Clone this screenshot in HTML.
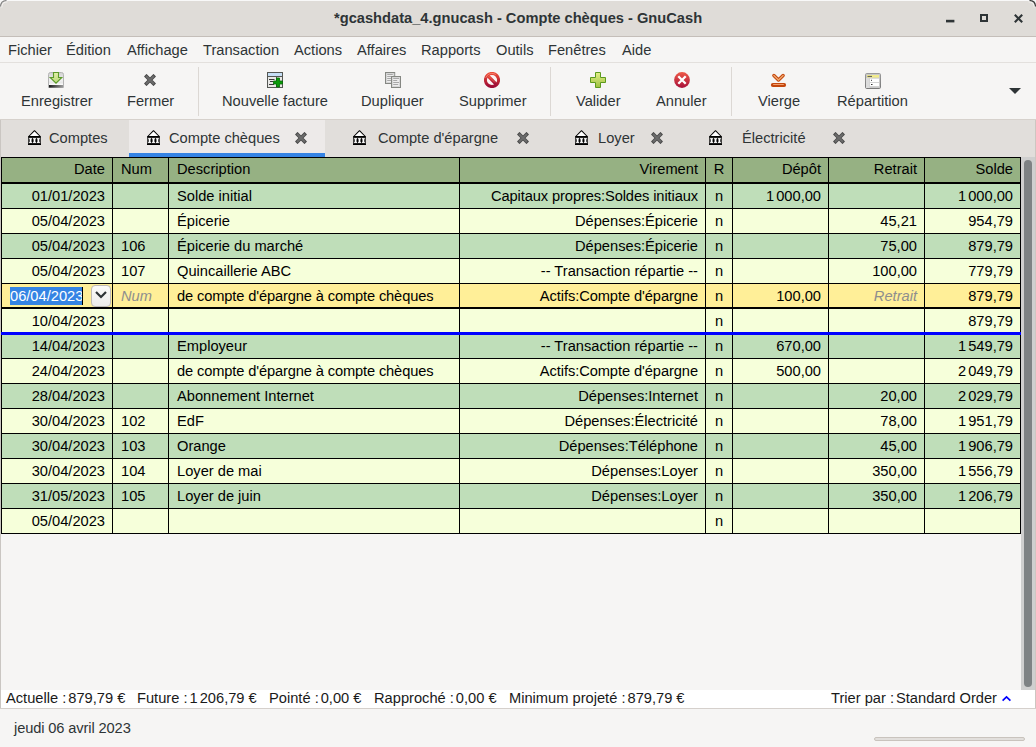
<!DOCTYPE html>
<html><head><meta charset="utf-8"><style>
html,body{margin:0;padding:0;width:1036px;height:747px;overflow:hidden;background:#f6f5f4}
.t{position:absolute;font-family:'Liberation Sans', sans-serif;font-size:14.667px;line-height:17px;white-space:pre}
.ns{display:inline-block;width:2px}
.t2{display:inline-block;width:2px}
.t3{display:inline-block;width:4px}
</style></head><body>
<div style="position:absolute;left:0px;top:0px;width:1036px;height:747px;background:#f6f5f4;"></div><div style="position:absolute;left:0px;top:0px;width:1036px;height:1px;background:#f8f8f8;"></div><div style="position:absolute;left:0px;top:1px;width:1036px;height:35px;background:#dfdcd8;border-radius:7px 7px 0 0;"></div><div style="position:absolute;left:0px;top:36px;width:1036px;height:1px;background:#c4beb9;"></div><div class="t" style="left:334px;top:10px;color:#2e3436;font-weight:bold;">*gcashdata_4.gnucash - Compte chèques - GnuCash</div><svg style="position:absolute;left:945px;top:18px" width="11" height="6" viewBox="0 0 11 6"><rect x="1" y="1.8" width="8.4" height="2.6" fill="#2e3436"/></svg><div style="position:absolute;left:980px;top:14px;width:4px;height:4px;border:2px solid #2e3436"></div><svg style="position:absolute;left:1013px;top:13px" width="11" height="11" viewBox="0 0 11 11"><path d="M1.8 1.8 L9.2 9.2 M9.2 1.8 L1.8 9.2" stroke="#2e3436" stroke-width="2.1"/></svg><div style="position:absolute;left:0px;top:62px;width:1036px;height:1px;background:#e3e0dd;"></div><div class="t" style="left:8px;top:42px;color:#2e3436;">Fichier</div><div class="t" style="left:66px;top:42px;color:#2e3436;">Édition</div><div class="t" style="left:127px;top:42px;color:#2e3436;">Affichage</div><div class="t" style="left:203px;top:42px;color:#2e3436;">Transaction</div><div class="t" style="left:294px;top:42px;color:#2e3436;">Actions</div><div class="t" style="left:357px;top:42px;color:#2e3436;">Affaires</div><div class="t" style="left:421px;top:42px;color:#2e3436;">Rapports</div><div class="t" style="left:496px;top:42px;color:#2e3436;">Outils</div><div class="t" style="left:548px;top:42px;color:#2e3436;">Fenêtres</div><div class="t" style="left:622px;top:42px;color:#2e3436;">Aide</div><div style="position:absolute;left:0px;top:119px;width:1036px;height:1px;background:#d6d1cc;"></div><div class="t" style="left:21px;top:93px;color:#2e3436;">Enregistrer</div><div class="t" style="left:127px;top:93px;color:#2e3436;">Fermer</div><div class="t" style="left:222px;top:93px;color:#2e3436;">Nouvelle facture</div><div class="t" style="left:361px;top:93px;color:#2e3436;">Dupliquer</div><div class="t" style="left:459px;top:93px;color:#2e3436;">Supprimer</div><div class="t" style="left:576px;top:93px;color:#2e3436;">Valider</div><div class="t" style="left:656px;top:93px;color:#2e3436;">Annuler</div><div class="t" style="left:758px;top:93px;color:#2e3436;">Vierge</div><div class="t" style="left:837px;top:93px;color:#2e3436;">Répartition</div><div style="position:absolute;left:198px;top:67px;width:1px;height:49px;background:#dcd8d4;"></div><div style="position:absolute;left:550px;top:67px;width:1px;height:49px;background:#dcd8d4;"></div><div style="position:absolute;left:731px;top:67px;width:1px;height:49px;background:#dcd8d4;"></div><svg style="position:absolute;left:1008px;top:87px" width="14" height="8" viewBox="0 0 14 8"><path d="M1 1 L13 1 L7 7 Z" fill="#2e3436"/></svg><div style="position:absolute;left:48px;top:72px;line-height:0"><svg width="16" height="16" viewBox="0 0 16 16">
<defs><linearGradient id="gs" x1="0" y1="0" x2="0" y2="1"><stop offset="0" stop-color="#d0d0d0"/><stop offset="0.5" stop-color="#f0f0f0"/><stop offset="1" stop-color="#d8d8d8"/></linearGradient>
<linearGradient id="gst" x1="0" y1="0" x2="1" y2="0"><stop offset="0" stop-color="#1a1a1a"/><stop offset="1" stop-color="#9a9a9a"/></linearGradient>
<linearGradient id="ga" x1="0" y1="0" x2="0" y2="1"><stop offset="0" stop-color="#e4f0a8"/><stop offset="1" stop-color="#b8d878"/></linearGradient></defs>
<path d="M2.5 0.5 H13.5 Q15.5 0.5 15.5 2.5 V15.5 H0.5 V2.5 Q0.5 0.5 2.5 0.5 Z" fill="url(#gs)" stroke="#b4b4b4"/>
<rect x="1" y="11.6" width="14" height="1.2" fill="#ffffff"/>
<rect x="1" y="13" width="14" height="2.6" fill="url(#gst)"/>
<path d="M5.5 0.5 H10.5 V5.5 H13.8 L8 11.2 L2.2 5.5 H5.5 Z" fill="url(#ga)" stroke="#5c9a2a" stroke-width="1.1" stroke-linejoin="miter"/>
</svg></div><div style="position:absolute;left:144px;top:74px;line-height:0"><svg width="12" height="12" viewBox="0 0 12 12"><path d="M1.2 1.2 L10.8 10.8 M10.8 1.2 L1.2 10.8" stroke="#4a4a4a" stroke-width="3.7"/><path d="M2 2 L10 10 M10 2 L2 10" stroke="#6c6c6c" stroke-width="1.9"/></svg></div><div style="position:absolute;left:267px;top:72px;line-height:0"><svg width="16" height="16" viewBox="0 0 16 16">
<rect x="0.5" y="0.5" width="15" height="15" fill="#e8e8e6" stroke="#555753"/>
<rect x="1" y="1" width="14" height="3.5" fill="#c6def5"/>
<path d="M0.5 4.5 H15.5" stroke="#555753"/>
<path d="M9.5 5 V15" stroke="#555753"/>
<path d="M2 7.5 H7.5 M3 9.5 H6 M2 12.5 H7" stroke="#3a3a3a" stroke-width="1"/>
<path d="M9.5 6 H12.5 V9 H15.5 V12 H12.5 V15 H9.5 V12 H6.5 V9 H9.5 Z" fill="#0a9a0a" stroke="#066b06" stroke-width="0.8"/>
</svg></div><div style="position:absolute;left:385px;top:72px;line-height:0"><svg width="16" height="16" viewBox="0 0 16 16">
<rect x="0.5" y="0.5" width="9.2" height="11" fill="#ededed" stroke="#858782" stroke-width="1"/>
<rect x="1.5" y="1.5" width="7.2" height="9" fill="none" stroke="#d0d0d0" stroke-width="0.8"/>
<path d="M2.2 2.5 H7.8 M2.2 4.5 H7.8 M2.2 6.5 H7.8 M2.2 8.5 H7.8" stroke="#a8a8a8" stroke-width="1"/>
<rect x="6.5" y="4.5" width="9" height="11" fill="#ededed" stroke="#858782" stroke-width="1"/>
<rect x="7.5" y="5.5" width="7" height="9" fill="none" stroke="#d0d0d0" stroke-width="0.8"/>
<path d="M8.2 6.5 H14 M8.2 8.5 H12.2 M8.2 10.5 H14 M8.2 12.5 H13.2" stroke="#a8a8a8" stroke-width="1"/>
</svg></div><div style="position:absolute;left:484px;top:72px;line-height:0"><svg width="16" height="16" viewBox="0 0 16 16">
<defs><linearGradient id="gr" x1="0" y1="0" x2="0" y2="1"><stop offset="0" stop-color="#ec4a36"/><stop offset="1" stop-color="#9c0c36"/></linearGradient></defs>
<circle cx="8" cy="8" r="5.5" fill="#fbf4f4"/>
<circle cx="8" cy="8" r="6.6" fill="none" stroke="url(#gr)" stroke-width="3"/>
<circle cx="8" cy="8" r="6.6" fill="none" stroke="#f8a090" stroke-width="0.6" stroke-dasharray="12 40" transform="rotate(200 8 8)"/>
<path d="M4.2 4.2 L11.8 11.8" stroke="url(#gr)" stroke-width="3.3"/>
<path d="M4.8 4.4 L11 10.6" stroke="#f07a6a" stroke-width="0.6"/>
</svg></div><div style="position:absolute;left:590px;top:72px;line-height:0"><svg width="16" height="16" viewBox="0 0 16 16">
<defs><linearGradient id="gp" x1="0" y1="0" x2="0" y2="1"><stop offset="0" stop-color="#e4f088"/><stop offset="1" stop-color="#9cc040"/></linearGradient></defs>
<path d="M5.5 0.5 H10.5 V5.5 H15.5 V10.5 H10.5 V15.5 H5.5 V10.5 H0.5 V5.5 H5.5 Z" fill="url(#gp)" stroke="#5c9a1c"/>
</svg></div><div style="position:absolute;left:674px;top:72px;line-height:0"><svg width="16" height="16" viewBox="0 0 16 16">
<defs><linearGradient id="gc" x1="0" y1="0" x2="0" y2="1"><stop offset="0" stop-color="#ee5a48"/><stop offset="1" stop-color="#a8103a"/></linearGradient></defs>
<circle cx="8" cy="8" r="7.9" fill="url(#gc)"/>
<path d="M4.3 4.3 L11.7 11.7 M11.7 4.3 L4.3 11.7" stroke="#fff" stroke-width="2.3"/>
</svg></div><div style="position:absolute;left:770px;top:72px;line-height:0"><svg width="18" height="16" viewBox="0 0 18 16">
<path d="M3.9 3.5 L8.5 8 L13.1 3.5" fill="none" stroke="#c4460c" stroke-width="3.4" stroke-linecap="round" stroke-linejoin="round"/>
<path d="M3.9 3.5 L8.5 8 L13.1 3.5" fill="none" stroke="#f0aa70" stroke-width="1.3" stroke-linecap="round" stroke-linejoin="round"/>
<path d="M2.8 13 H14.2" stroke="#c4460c" stroke-width="3.8" stroke-linecap="round"/>
<path d="M3.2 12.5 H13.8" stroke="#f3a070" stroke-width="1"/>
</svg></div><div style="position:absolute;left:865px;top:73px;line-height:0"><svg width="16" height="16" viewBox="0 0 16 16">
<defs><linearGradient id="gsp" x1="0" y1="0" x2="0" y2="1"><stop offset="0" stop-color="#9a9a9a"/><stop offset="1" stop-color="#7a7a7a"/></linearGradient></defs>
<rect x="0.5" y="0.5" width="15" height="15" rx="1.2" fill="#c9c9c9" stroke="url(#gsp)"/>
<rect x="2" y="2" width="12" height="2.6" fill="#f2ec8c"/>
<path d="M2.5 3.4 H7" stroke="#555" stroke-width="1"/>
<rect x="1" y="5" width="3.6" height="10" fill="#dcdcdc"/>
<rect x="5" y="5.6" width="9" height="3.4" fill="#ffffff"/>
<rect x="5" y="9.8" width="9" height="3.4" fill="#ffffff"/>
<path d="M6 7.3 H7 M6 11.5 H7.5" stroke="#333" stroke-width="1"/>
</svg></div><div style="position:absolute;left:0px;top:120px;width:1036px;height:37px;background:#e1dedb;"></div><div style="position:absolute;left:129px;top:120px;width:196px;height:37px;background:#edeae9;"></div><div style="position:absolute;left:129px;top:153px;width:196px;height:4px;background:#3584e4;"></div><div style="position:absolute;left:28px;top:130px;line-height:0"><svg width="14" height="16" viewBox="0 0 14 16">
<path d="M6.5 0.7 L12.3 6.5 H0.7 Z" fill="#fff" stroke="#000" stroke-width="1.05" stroke-linejoin="round"/>
<rect x="0" y="6.4" width="13" height="1.4" fill="#000"/>
<rect x="0.3" y="7.8" width="12.4" height="5.6" fill="#000"/>
<rect x="0" y="13.2" width="13" height="1.8" fill="#000"/>
<path d="M1.1 8.7 H4.1 M4.9 8.7 H8.1 M8.9 8.7 H11.9 M1.1 12.4 H4.1 M4.9 12.4 H8.1 M8.9 12.4 H11.9" stroke="#fff" stroke-width="1"/>
<path d="M2.6 8.5 V12.6 M6.5 8.5 V12.6 M10.4 8.5 V12.6" stroke="#fff" stroke-width="1.8"/>
</svg></div><div class="t" style="left:49px;top:130px;color:#2e3436;">Comptes</div><div style="position:absolute;left:147px;top:130px;line-height:0"><svg width="14" height="16" viewBox="0 0 14 16">
<path d="M6.5 0.7 L12.3 6.5 H0.7 Z" fill="#fff" stroke="#000" stroke-width="1.05" stroke-linejoin="round"/>
<rect x="0" y="6.4" width="13" height="1.4" fill="#000"/>
<rect x="0.3" y="7.8" width="12.4" height="5.6" fill="#000"/>
<rect x="0" y="13.2" width="13" height="1.8" fill="#000"/>
<path d="M1.1 8.7 H4.1 M4.9 8.7 H8.1 M8.9 8.7 H11.9 M1.1 12.4 H4.1 M4.9 12.4 H8.1 M8.9 12.4 H11.9" stroke="#fff" stroke-width="1"/>
<path d="M2.6 8.5 V12.6 M6.5 8.5 V12.6 M10.4 8.5 V12.6" stroke="#fff" stroke-width="1.8"/>
</svg></div><div class="t" style="left:169px;top:130px;color:#2e3436;">Compte chèques</div><div style="position:absolute;left:295px;top:132px;line-height:0"><svg width="12" height="12" viewBox="0 0 12 12"><path d="M1.2 1.2 L10.8 10.8 M10.8 1.2 L1.2 10.8" stroke="#4a4a4a" stroke-width="3.7"/><path d="M2 2 L10 10 M10 2 L2 10" stroke="#6c6c6c" stroke-width="1.9"/></svg></div><div style="position:absolute;left:353px;top:130px;line-height:0"><svg width="14" height="16" viewBox="0 0 14 16">
<path d="M6.5 0.7 L12.3 6.5 H0.7 Z" fill="#fff" stroke="#000" stroke-width="1.05" stroke-linejoin="round"/>
<rect x="0" y="6.4" width="13" height="1.4" fill="#000"/>
<rect x="0.3" y="7.8" width="12.4" height="5.6" fill="#000"/>
<rect x="0" y="13.2" width="13" height="1.8" fill="#000"/>
<path d="M1.1 8.7 H4.1 M4.9 8.7 H8.1 M8.9 8.7 H11.9 M1.1 12.4 H4.1 M4.9 12.4 H8.1 M8.9 12.4 H11.9" stroke="#fff" stroke-width="1"/>
<path d="M2.6 8.5 V12.6 M6.5 8.5 V12.6 M10.4 8.5 V12.6" stroke="#fff" stroke-width="1.8"/>
</svg></div><div class="t" style="left:378px;top:130px;color:#2e3436;">Compte d'épargne</div><div style="position:absolute;left:517px;top:132px;line-height:0"><svg width="12" height="12" viewBox="0 0 12 12"><path d="M1.2 1.2 L10.8 10.8 M10.8 1.2 L1.2 10.8" stroke="#4a4a4a" stroke-width="3.7"/><path d="M2 2 L10 10 M10 2 L2 10" stroke="#6c6c6c" stroke-width="1.9"/></svg></div><div style="position:absolute;left:575px;top:130px;line-height:0"><svg width="14" height="16" viewBox="0 0 14 16">
<path d="M6.5 0.7 L12.3 6.5 H0.7 Z" fill="#fff" stroke="#000" stroke-width="1.05" stroke-linejoin="round"/>
<rect x="0" y="6.4" width="13" height="1.4" fill="#000"/>
<rect x="0.3" y="7.8" width="12.4" height="5.6" fill="#000"/>
<rect x="0" y="13.2" width="13" height="1.8" fill="#000"/>
<path d="M1.1 8.7 H4.1 M4.9 8.7 H8.1 M8.9 8.7 H11.9 M1.1 12.4 H4.1 M4.9 12.4 H8.1 M8.9 12.4 H11.9" stroke="#fff" stroke-width="1"/>
<path d="M2.6 8.5 V12.6 M6.5 8.5 V12.6 M10.4 8.5 V12.6" stroke="#fff" stroke-width="1.8"/>
</svg></div><div class="t" style="left:598px;top:130px;color:#2e3436;">Loyer</div><div style="position:absolute;left:651px;top:132px;line-height:0"><svg width="12" height="12" viewBox="0 0 12 12"><path d="M1.2 1.2 L10.8 10.8 M10.8 1.2 L1.2 10.8" stroke="#4a4a4a" stroke-width="3.7"/><path d="M2 2 L10 10 M10 2 L2 10" stroke="#6c6c6c" stroke-width="1.9"/></svg></div><div style="position:absolute;left:709px;top:130px;line-height:0"><svg width="14" height="16" viewBox="0 0 14 16">
<path d="M6.5 0.7 L12.3 6.5 H0.7 Z" fill="#fff" stroke="#000" stroke-width="1.05" stroke-linejoin="round"/>
<rect x="0" y="6.4" width="13" height="1.4" fill="#000"/>
<rect x="0.3" y="7.8" width="12.4" height="5.6" fill="#000"/>
<rect x="0" y="13.2" width="13" height="1.8" fill="#000"/>
<path d="M1.1 8.7 H4.1 M4.9 8.7 H8.1 M8.9 8.7 H11.9 M1.1 12.4 H4.1 M4.9 12.4 H8.1 M8.9 12.4 H11.9" stroke="#fff" stroke-width="1"/>
<path d="M2.6 8.5 V12.6 M6.5 8.5 V12.6 M10.4 8.5 V12.6" stroke="#fff" stroke-width="1.8"/>
</svg></div><div class="t" style="left:742px;top:130px;color:#2e3436;">Électricité</div><div style="position:absolute;left:833px;top:132px;line-height:0"><svg width="12" height="12" viewBox="0 0 12 12"><path d="M1.2 1.2 L10.8 10.8 M10.8 1.2 L1.2 10.8" stroke="#4a4a4a" stroke-width="3.7"/><path d="M2 2 L10 10 M10 2 L2 10" stroke="#6c6c6c" stroke-width="1.9"/></svg></div><div style="position:absolute;left:1px;top:157px;width:1020px;height:27px;background:#000;"></div><div style="position:absolute;left:2px;top:158px;width:1018px;height:24px;background:#96b183;"></div><div style="position:absolute;left:112px;top:158px;width:1px;height:24px;background:#000;"></div><div style="position:absolute;left:168px;top:158px;width:1px;height:24px;background:#000;"></div><div style="position:absolute;left:459px;top:158px;width:1px;height:24px;background:#000;"></div><div style="position:absolute;left:705px;top:158px;width:1px;height:24px;background:#000;"></div><div style="position:absolute;left:732px;top:158px;width:1px;height:24px;background:#000;"></div><div style="position:absolute;left:828px;top:158px;width:1px;height:24px;background:#000;"></div><div style="position:absolute;left:924px;top:158px;width:1px;height:24px;background:#000;"></div><div class="t" style="right:931px;top:161px;text-align:right;color:#000;">Date</div><div class="t" style="left:121px;top:161px;color:#000;">Num</div><div class="t" style="left:177px;top:161px;color:#000;">Description</div><div class="t" style="right:338px;top:161px;text-align:right;color:#000;">Virement</div><div class="t" style="left:706px;width:26px;top:161px;text-align:center;color:#000;">R</div><div class="t" style="right:215px;top:161px;text-align:right;color:#000;">Dépôt</div><div class="t" style="right:119px;top:161px;text-align:right;color:#000;">Retrait</div><div class="t" style="right:23px;top:161px;text-align:right;color:#000;">Solde</div><div style="position:absolute;left:1px;top:184px;width:1020px;height:350px;background:#000;"></div><div style="position:absolute;left:2px;top:184px;width:110px;height:24px;background:#bfdeb9;"></div><div style="position:absolute;left:113px;top:184px;width:55px;height:24px;background:#bfdeb9;"></div><div style="position:absolute;left:169px;top:184px;width:290px;height:24px;background:#bfdeb9;"></div><div style="position:absolute;left:460px;top:184px;width:245px;height:24px;background:#bfdeb9;"></div><div style="position:absolute;left:706px;top:184px;width:26px;height:24px;background:#bfdeb9;"></div><div style="position:absolute;left:733px;top:184px;width:95px;height:24px;background:#bfdeb9;"></div><div style="position:absolute;left:829px;top:184px;width:95px;height:24px;background:#bfdeb9;"></div><div style="position:absolute;left:925px;top:184px;width:95px;height:24px;background:#bfdeb9;"></div><div class="t" style="right:931px;top:188px;text-align:right;color:#000;">01/01/2023</div><div class="t" style="left:177px;top:188px;color:#000;">Solde initial</div><div class="t" style="right:338px;top:188px;text-align:right;color:#000;letter-spacing:-0.1px;">Capitaux propres:Soldes initiaux</div><div class="t" style="left:706px;width:26px;top:188px;text-align:center;color:#000;">n</div><div class="t" style="right:215px;top:188px;text-align:right;color:#000;">1<span class="ns"></span>000,00</div><div class="t" style="right:23px;top:188px;text-align:right;color:#000;">1<span class="ns"></span>000,00</div><div style="position:absolute;left:2px;top:209px;width:110px;height:24px;background:#f6ffda;"></div><div style="position:absolute;left:113px;top:209px;width:55px;height:24px;background:#f6ffda;"></div><div style="position:absolute;left:169px;top:209px;width:290px;height:24px;background:#f6ffda;"></div><div style="position:absolute;left:460px;top:209px;width:245px;height:24px;background:#f6ffda;"></div><div style="position:absolute;left:706px;top:209px;width:26px;height:24px;background:#f6ffda;"></div><div style="position:absolute;left:733px;top:209px;width:95px;height:24px;background:#f6ffda;"></div><div style="position:absolute;left:829px;top:209px;width:95px;height:24px;background:#f6ffda;"></div><div style="position:absolute;left:925px;top:209px;width:95px;height:24px;background:#f6ffda;"></div><div class="t" style="right:931px;top:213px;text-align:right;color:#000;">05/04/2023</div><div class="t" style="left:177px;top:213px;color:#000;">Épicerie</div><div class="t" style="right:338px;top:213px;text-align:right;color:#000;">Dépenses:Épicerie</div><div class="t" style="left:706px;width:26px;top:213px;text-align:center;color:#000;">n</div><div class="t" style="right:119px;top:213px;text-align:right;color:#000;">45,21</div><div class="t" style="right:23px;top:213px;text-align:right;color:#000;">954,79</div><div style="position:absolute;left:2px;top:234px;width:110px;height:24px;background:#bfdeb9;"></div><div style="position:absolute;left:113px;top:234px;width:55px;height:24px;background:#bfdeb9;"></div><div style="position:absolute;left:169px;top:234px;width:290px;height:24px;background:#bfdeb9;"></div><div style="position:absolute;left:460px;top:234px;width:245px;height:24px;background:#bfdeb9;"></div><div style="position:absolute;left:706px;top:234px;width:26px;height:24px;background:#bfdeb9;"></div><div style="position:absolute;left:733px;top:234px;width:95px;height:24px;background:#bfdeb9;"></div><div style="position:absolute;left:829px;top:234px;width:95px;height:24px;background:#bfdeb9;"></div><div style="position:absolute;left:925px;top:234px;width:95px;height:24px;background:#bfdeb9;"></div><div class="t" style="right:931px;top:238px;text-align:right;color:#000;">05/04/2023</div><div class="t" style="left:121px;top:238px;color:#000;">106</div><div class="t" style="left:177px;top:238px;color:#000;">Épicerie du marché</div><div class="t" style="right:338px;top:238px;text-align:right;color:#000;">Dépenses:Épicerie</div><div class="t" style="left:706px;width:26px;top:238px;text-align:center;color:#000;">n</div><div class="t" style="right:119px;top:238px;text-align:right;color:#000;">75,00</div><div class="t" style="right:23px;top:238px;text-align:right;color:#000;">879,79</div><div style="position:absolute;left:2px;top:259px;width:110px;height:24px;background:#f6ffda;"></div><div style="position:absolute;left:113px;top:259px;width:55px;height:24px;background:#f6ffda;"></div><div style="position:absolute;left:169px;top:259px;width:290px;height:24px;background:#f6ffda;"></div><div style="position:absolute;left:460px;top:259px;width:245px;height:24px;background:#f6ffda;"></div><div style="position:absolute;left:706px;top:259px;width:26px;height:24px;background:#f6ffda;"></div><div style="position:absolute;left:733px;top:259px;width:95px;height:24px;background:#f6ffda;"></div><div style="position:absolute;left:829px;top:259px;width:95px;height:24px;background:#f6ffda;"></div><div style="position:absolute;left:925px;top:259px;width:95px;height:24px;background:#f6ffda;"></div><div class="t" style="right:931px;top:263px;text-align:right;color:#000;">05/04/2023</div><div class="t" style="left:121px;top:263px;color:#000;">107</div><div class="t" style="left:177px;top:263px;color:#000;">Quincaillerie ABC</div><div class="t" style="right:338px;top:263px;text-align:right;color:#000;">-- Transaction répartie --</div><div class="t" style="left:706px;width:26px;top:263px;text-align:center;color:#000;">n</div><div class="t" style="right:119px;top:263px;text-align:right;color:#000;">100,00</div><div class="t" style="right:23px;top:263px;text-align:right;color:#000;">779,79</div><div style="position:absolute;left:2px;top:284px;width:110px;height:23px;background:#ffef98;"></div><div style="position:absolute;left:113px;top:284px;width:55px;height:23px;background:#ffef98;"></div><div style="position:absolute;left:169px;top:284px;width:290px;height:23px;background:#ffef98;"></div><div style="position:absolute;left:460px;top:284px;width:245px;height:23px;background:#ffef98;"></div><div style="position:absolute;left:706px;top:284px;width:26px;height:23px;background:#ffef98;"></div><div style="position:absolute;left:733px;top:284px;width:95px;height:23px;background:#ffef98;"></div><div style="position:absolute;left:829px;top:284px;width:95px;height:23px;background:#ffef98;"></div><div style="position:absolute;left:925px;top:284px;width:95px;height:23px;background:#ffef98;"></div><div class="t" style="left:121px;top:288px;color:#8e8e8e;font-style:italic;">Num</div><div class="t" style="left:177px;top:288px;color:#000;letter-spacing:-0.13px;">de compte d'épargne à compte chèques</div><div class="t" style="right:338px;top:288px;text-align:right;color:#000;letter-spacing:-0.08px;">Actifs:Compte d'épargne</div><div class="t" style="left:706px;width:26px;top:288px;text-align:center;color:#000;">n</div><div class="t" style="right:215px;top:288px;text-align:right;color:#000;">100,00</div><div class="t" style="right:119px;top:288px;text-align:right;color:#8e8e8e;font-style:italic;">Retrait</div><div class="t" style="right:23px;top:288px;text-align:right;color:#000;">879,79</div><div style="position:absolute;left:2px;top:309px;width:110px;height:23px;background:#f6ffda;"></div><div style="position:absolute;left:113px;top:309px;width:55px;height:23px;background:#f6ffda;"></div><div style="position:absolute;left:169px;top:309px;width:290px;height:23px;background:#f6ffda;"></div><div style="position:absolute;left:460px;top:309px;width:245px;height:23px;background:#f6ffda;"></div><div style="position:absolute;left:706px;top:309px;width:26px;height:23px;background:#f6ffda;"></div><div style="position:absolute;left:733px;top:309px;width:95px;height:23px;background:#f6ffda;"></div><div style="position:absolute;left:829px;top:309px;width:95px;height:23px;background:#f6ffda;"></div><div style="position:absolute;left:925px;top:309px;width:95px;height:23px;background:#f6ffda;"></div><div class="t" style="right:931px;top:313px;text-align:right;color:#000;">10/04/2023</div><div class="t" style="left:706px;width:26px;top:313px;text-align:center;color:#000;">n</div><div class="t" style="right:23px;top:313px;text-align:right;color:#000;">879,79</div><div style="position:absolute;left:2px;top:335px;width:110px;height:23px;background:#bfdeb9;"></div><div style="position:absolute;left:113px;top:335px;width:55px;height:23px;background:#bfdeb9;"></div><div style="position:absolute;left:169px;top:335px;width:290px;height:23px;background:#bfdeb9;"></div><div style="position:absolute;left:460px;top:335px;width:245px;height:23px;background:#bfdeb9;"></div><div style="position:absolute;left:706px;top:335px;width:26px;height:23px;background:#bfdeb9;"></div><div style="position:absolute;left:733px;top:335px;width:95px;height:23px;background:#bfdeb9;"></div><div style="position:absolute;left:829px;top:335px;width:95px;height:23px;background:#bfdeb9;"></div><div style="position:absolute;left:925px;top:335px;width:95px;height:23px;background:#bfdeb9;"></div><div class="t" style="right:931px;top:338px;text-align:right;color:#000;">14/04/2023</div><div class="t" style="left:177px;top:338px;color:#000;">Employeur</div><div class="t" style="right:338px;top:338px;text-align:right;color:#000;">-- Transaction répartie --</div><div class="t" style="left:706px;width:26px;top:338px;text-align:center;color:#000;">n</div><div class="t" style="right:215px;top:338px;text-align:right;color:#000;">670,00</div><div class="t" style="right:23px;top:338px;text-align:right;color:#000;">1<span class="ns"></span>549,79</div><div style="position:absolute;left:2px;top:359px;width:110px;height:24px;background:#f6ffda;"></div><div style="position:absolute;left:113px;top:359px;width:55px;height:24px;background:#f6ffda;"></div><div style="position:absolute;left:169px;top:359px;width:290px;height:24px;background:#f6ffda;"></div><div style="position:absolute;left:460px;top:359px;width:245px;height:24px;background:#f6ffda;"></div><div style="position:absolute;left:706px;top:359px;width:26px;height:24px;background:#f6ffda;"></div><div style="position:absolute;left:733px;top:359px;width:95px;height:24px;background:#f6ffda;"></div><div style="position:absolute;left:829px;top:359px;width:95px;height:24px;background:#f6ffda;"></div><div style="position:absolute;left:925px;top:359px;width:95px;height:24px;background:#f6ffda;"></div><div class="t" style="right:931px;top:363px;text-align:right;color:#000;">24/04/2023</div><div class="t" style="left:177px;top:363px;color:#000;letter-spacing:-0.13px;">de compte d'épargne à compte chèques</div><div class="t" style="right:338px;top:363px;text-align:right;color:#000;letter-spacing:-0.08px;">Actifs:Compte d'épargne</div><div class="t" style="left:706px;width:26px;top:363px;text-align:center;color:#000;">n</div><div class="t" style="right:215px;top:363px;text-align:right;color:#000;">500,00</div><div class="t" style="right:23px;top:363px;text-align:right;color:#000;">2<span class="ns"></span>049,79</div><div style="position:absolute;left:2px;top:384px;width:110px;height:24px;background:#bfdeb9;"></div><div style="position:absolute;left:113px;top:384px;width:55px;height:24px;background:#bfdeb9;"></div><div style="position:absolute;left:169px;top:384px;width:290px;height:24px;background:#bfdeb9;"></div><div style="position:absolute;left:460px;top:384px;width:245px;height:24px;background:#bfdeb9;"></div><div style="position:absolute;left:706px;top:384px;width:26px;height:24px;background:#bfdeb9;"></div><div style="position:absolute;left:733px;top:384px;width:95px;height:24px;background:#bfdeb9;"></div><div style="position:absolute;left:829px;top:384px;width:95px;height:24px;background:#bfdeb9;"></div><div style="position:absolute;left:925px;top:384px;width:95px;height:24px;background:#bfdeb9;"></div><div class="t" style="right:931px;top:388px;text-align:right;color:#000;">28/04/2023</div><div class="t" style="left:177px;top:388px;color:#000;">Abonnement Internet</div><div class="t" style="right:338px;top:388px;text-align:right;color:#000;">Dépenses:Internet</div><div class="t" style="left:706px;width:26px;top:388px;text-align:center;color:#000;">n</div><div class="t" style="right:119px;top:388px;text-align:right;color:#000;">20,00</div><div class="t" style="right:23px;top:388px;text-align:right;color:#000;">2<span class="ns"></span>029,79</div><div style="position:absolute;left:2px;top:409px;width:110px;height:24px;background:#f6ffda;"></div><div style="position:absolute;left:113px;top:409px;width:55px;height:24px;background:#f6ffda;"></div><div style="position:absolute;left:169px;top:409px;width:290px;height:24px;background:#f6ffda;"></div><div style="position:absolute;left:460px;top:409px;width:245px;height:24px;background:#f6ffda;"></div><div style="position:absolute;left:706px;top:409px;width:26px;height:24px;background:#f6ffda;"></div><div style="position:absolute;left:733px;top:409px;width:95px;height:24px;background:#f6ffda;"></div><div style="position:absolute;left:829px;top:409px;width:95px;height:24px;background:#f6ffda;"></div><div style="position:absolute;left:925px;top:409px;width:95px;height:24px;background:#f6ffda;"></div><div class="t" style="right:931px;top:413px;text-align:right;color:#000;">30/04/2023</div><div class="t" style="left:121px;top:413px;color:#000;">102</div><div class="t" style="left:177px;top:413px;color:#000;">EdF</div><div class="t" style="right:338px;top:413px;text-align:right;color:#000;">Dépenses:Électricité</div><div class="t" style="left:706px;width:26px;top:413px;text-align:center;color:#000;">n</div><div class="t" style="right:119px;top:413px;text-align:right;color:#000;">78,00</div><div class="t" style="right:23px;top:413px;text-align:right;color:#000;">1<span class="ns"></span>951,79</div><div style="position:absolute;left:2px;top:434px;width:110px;height:24px;background:#bfdeb9;"></div><div style="position:absolute;left:113px;top:434px;width:55px;height:24px;background:#bfdeb9;"></div><div style="position:absolute;left:169px;top:434px;width:290px;height:24px;background:#bfdeb9;"></div><div style="position:absolute;left:460px;top:434px;width:245px;height:24px;background:#bfdeb9;"></div><div style="position:absolute;left:706px;top:434px;width:26px;height:24px;background:#bfdeb9;"></div><div style="position:absolute;left:733px;top:434px;width:95px;height:24px;background:#bfdeb9;"></div><div style="position:absolute;left:829px;top:434px;width:95px;height:24px;background:#bfdeb9;"></div><div style="position:absolute;left:925px;top:434px;width:95px;height:24px;background:#bfdeb9;"></div><div class="t" style="right:931px;top:438px;text-align:right;color:#000;">30/04/2023</div><div class="t" style="left:121px;top:438px;color:#000;">103</div><div class="t" style="left:177px;top:438px;color:#000;">Orange</div><div class="t" style="right:338px;top:438px;text-align:right;color:#000;">Dépenses:Téléphone</div><div class="t" style="left:706px;width:26px;top:438px;text-align:center;color:#000;">n</div><div class="t" style="right:119px;top:438px;text-align:right;color:#000;">45,00</div><div class="t" style="right:23px;top:438px;text-align:right;color:#000;">1<span class="ns"></span>906,79</div><div style="position:absolute;left:2px;top:459px;width:110px;height:24px;background:#f6ffda;"></div><div style="position:absolute;left:113px;top:459px;width:55px;height:24px;background:#f6ffda;"></div><div style="position:absolute;left:169px;top:459px;width:290px;height:24px;background:#f6ffda;"></div><div style="position:absolute;left:460px;top:459px;width:245px;height:24px;background:#f6ffda;"></div><div style="position:absolute;left:706px;top:459px;width:26px;height:24px;background:#f6ffda;"></div><div style="position:absolute;left:733px;top:459px;width:95px;height:24px;background:#f6ffda;"></div><div style="position:absolute;left:829px;top:459px;width:95px;height:24px;background:#f6ffda;"></div><div style="position:absolute;left:925px;top:459px;width:95px;height:24px;background:#f6ffda;"></div><div class="t" style="right:931px;top:463px;text-align:right;color:#000;">30/04/2023</div><div class="t" style="left:121px;top:463px;color:#000;">104</div><div class="t" style="left:177px;top:463px;color:#000;">Loyer de mai</div><div class="t" style="right:338px;top:463px;text-align:right;color:#000;">Dépenses:Loyer</div><div class="t" style="left:706px;width:26px;top:463px;text-align:center;color:#000;">n</div><div class="t" style="right:119px;top:463px;text-align:right;color:#000;">350,00</div><div class="t" style="right:23px;top:463px;text-align:right;color:#000;">1<span class="ns"></span>556,79</div><div style="position:absolute;left:2px;top:484px;width:110px;height:24px;background:#bfdeb9;"></div><div style="position:absolute;left:113px;top:484px;width:55px;height:24px;background:#bfdeb9;"></div><div style="position:absolute;left:169px;top:484px;width:290px;height:24px;background:#bfdeb9;"></div><div style="position:absolute;left:460px;top:484px;width:245px;height:24px;background:#bfdeb9;"></div><div style="position:absolute;left:706px;top:484px;width:26px;height:24px;background:#bfdeb9;"></div><div style="position:absolute;left:733px;top:484px;width:95px;height:24px;background:#bfdeb9;"></div><div style="position:absolute;left:829px;top:484px;width:95px;height:24px;background:#bfdeb9;"></div><div style="position:absolute;left:925px;top:484px;width:95px;height:24px;background:#bfdeb9;"></div><div class="t" style="right:931px;top:488px;text-align:right;color:#000;">31/05/2023</div><div class="t" style="left:121px;top:488px;color:#000;">105</div><div class="t" style="left:177px;top:488px;color:#000;">Loyer de juin</div><div class="t" style="right:338px;top:488px;text-align:right;color:#000;">Dépenses:Loyer</div><div class="t" style="left:706px;width:26px;top:488px;text-align:center;color:#000;">n</div><div class="t" style="right:119px;top:488px;text-align:right;color:#000;">350,00</div><div class="t" style="right:23px;top:488px;text-align:right;color:#000;">1<span class="ns"></span>206,79</div><div style="position:absolute;left:2px;top:509px;width:110px;height:24px;background:#f6ffda;"></div><div style="position:absolute;left:113px;top:509px;width:55px;height:24px;background:#f6ffda;"></div><div style="position:absolute;left:169px;top:509px;width:290px;height:24px;background:#f6ffda;"></div><div style="position:absolute;left:460px;top:509px;width:245px;height:24px;background:#f6ffda;"></div><div style="position:absolute;left:706px;top:509px;width:26px;height:24px;background:#f6ffda;"></div><div style="position:absolute;left:733px;top:509px;width:95px;height:24px;background:#f6ffda;"></div><div style="position:absolute;left:829px;top:509px;width:95px;height:24px;background:#f6ffda;"></div><div style="position:absolute;left:925px;top:509px;width:95px;height:24px;background:#f6ffda;"></div><div class="t" style="right:931px;top:513px;text-align:right;color:#000;">05/04/2023</div><div class="t" style="left:706px;width:26px;top:513px;text-align:center;color:#000;">n</div><div style="position:absolute;left:1px;top:332px;width:1020px;height:3px;background:#0000ff;"></div><div style="position:absolute;left:10px;top:287px;width:72px;height:18px;background:#3584e4;"></div><div class="t" style="left:10px;top:288px;color:#fff;">06/04/2023</div><div style="position:absolute;left:82px;top:287px;width:1px;height:18px;background:#000;"></div><div style="position:absolute;left:91px;top:285px;width:18px;height:20px;border:1px solid #c0bbb6;border-radius:4px;background:linear-gradient(#fbfbfa,#ecebea)"></div><svg style="position:absolute;left:94px;top:290px" width="14" height="10" viewBox="0 0 14 10"><path d="M2 2 L7 7 L12 2" fill="none" stroke="#2e3436" stroke-width="2.2"/></svg><div style="position:absolute;left:1021px;top:157px;width:14px;height:533px;background:#cfcfcf;"></div><div style="position:absolute;left:1024px;top:160px;width:8px;height:527px;background:#7e8284;border-radius:4px;"></div><div style="position:absolute;left:1035px;top:120px;width:1px;height:589px;background:#cdc6c1;"></div><div style="position:absolute;left:0px;top:120px;width:1px;height:589px;background:#cac6c2;"></div><div style="position:absolute;left:1px;top:690px;width:1034px;height:18px;background:#ffffff;"></div><div style="position:absolute;left:0px;top:708px;width:1036px;height:1px;background:#d5d0cc;"></div><div class="t" style="left:6px;top:690px;color:#1a1a1a;">Actuelle :<span class="t2"></span>879,79<span class="t3"></span>€</div><div class="t" style="left:137px;top:690px;color:#1a1a1a;">Future :<span class="t2"></span>1<span class="ns"></span>206,79<span class="t3"></span>€</div><div class="t" style="left:269px;top:690px;color:#1a1a1a;">Pointé :<span class="t2"></span>0,00<span class="t3"></span>€</div><div class="t" style="left:374px;top:690px;color:#1a1a1a;">Rapproché :<span class="t2"></span>0,00<span class="t3"></span>€</div><div class="t" style="left:509px;top:690px;color:#1a1a1a;">Minimum projeté :<span class="t2"></span>879,79<span class="t3"></span>€</div><div class="t" style="left:831px;top:690px;color:#1a1a1a;">Trier par :<span class="t2"></span>Standard Order</div><svg style="position:absolute;left:1001px;top:695px" width="11" height="8" viewBox="0 0 11 8"><path d="M1.6 5.6 L5.5 1.9 L9.4 5.6" fill="none" stroke="#0000ff" stroke-width="1.7"/></svg><svg style="position:absolute;left:0;top:0" width="10" height="10" viewBox="0 0 10 10"><path d="M0.6 6.5 Q0.6 0.6 6.5 0.6" fill="none" stroke="#7a7a7a" stroke-width="1.1"/><path d="M1.8 7.5 Q1.8 1.8 7.5 1.8" fill="none" stroke="#f4f2f0" stroke-width="1"/></svg><svg style="position:absolute;left:1026px;top:0" width="10" height="10" viewBox="0 0 10 10"><path d="M3.5 0.6 Q9.4 0.6 9.4 6.5" fill="none" stroke="#3a3a3a" stroke-width="1.3"/><path d="M2.5 1.8 Q8.2 1.8 8.2 7.5" fill="none" stroke="#f4f2f0" stroke-width="1"/></svg><div class="t" style="left:14px;top:720px;color:#2e3436;letter-spacing:-0.12px;">jeudi 06 avril 2023</div><div style="position:absolute;left:874px;top:737px;width:149px;height:2px;border:1px solid #c9c3bd;border-radius:2px;background:#e2dfdc"></div>
</body></html>
